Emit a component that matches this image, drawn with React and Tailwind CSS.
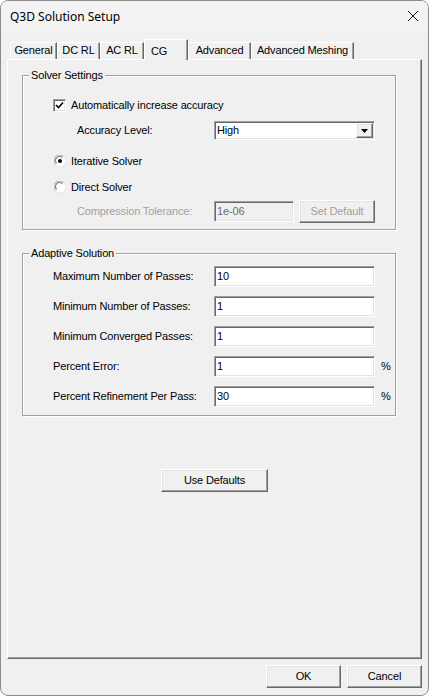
import React from "react";

const sunken =
  "border border-t-[#a0a0a0] border-l-[#a0a0a0] border-b-white border-r-white shadow-[inset_1px_1px_0_#696969,inset_-1px_-1px_0_#e3e3e3]";
const raised =
  "border border-t-white border-l-white border-b-[#696969] border-r-[#696969] shadow-[inset_-1px_-1px_0_#a0a0a0,inset_1px_1px_0_#e3e3e3]";
const etched =
  "border border-[#a0a0a0] shadow-[1px_1px_0_#fff,inset_1px_1px_0_#fff]";

const tabs = [
  { label: "General", w: "w-[47px]" },
  { label: "DC RL", w: "w-[43px]" },
  { label: "AC RL", w: "w-[44px]" },
  { label: "CG", w: "w-[44px]", active: true },
  { label: "Advanced", w: "w-[63px]" },
  { label: "Advanced Meshing", w: "w-[103px]" },
];

const passes = [
  { label: "Maximum Number of Passes:", value: "10" },
  { label: "Minimum Number of Passes:", value: "1" },
  { label: "Minimum Converged Passes:", value: "1" },
  { label: "Percent Error:", value: "1", unit: "%" },
  { label: "Percent Refinement Per Pass:", value: "30", unit: "%" },
];

const GroupBox = ({ title, className, children }) => (
  <div className={`relative ml-[14px] w-[374px] ${etched} ${className}`}>
    <span className="absolute -top-[7px] left-[6px] px-[2px] bg-[#f0f0f0] leading-[13px]">
      {title}
    </span>
    {children}
  </div>
);

const Radio = ({ checked }) => (
  <svg width="12" height="12" viewBox="0 0 12 12">
    <circle cx="6" cy="6" r="5.5" fill="#fff" />
    <path d="M1.5 9.5A5 5 0 0 1 9.5 1.5" stroke="#a0a0a0" fill="none" />
    <path d="M2.6 8.4A3.6 3.6 0 0 1 8.4 2.6" stroke="#5a5a5a" fill="none" />
    <path d="M10.5 2.5A5 5 0 0 1 2.5 10.5" stroke="#e3e3e3" fill="none" />
    {checked && <circle cx="6" cy="6" r="2" fill="#000" />}
  </svg>
);

const Button = ({ children, className, disabled }) => (
  <div
    className={`flex items-center justify-center h-[23px] bg-[#f0f0f0] ${raised} ${
      disabled ? "text-[#a0a0a0]" : "text-black"
    } ${className}`}
  >
    {children}
  </div>
);

export default function App() {
  return (
    <div
      className="w-[429px] h-[696px] bg-white text-[11px] tracking-[-0.15px] text-black"
      style={{ fontFamily: '"Liberation Sans", Arial, sans-serif' }}
    >
      <div className="w-full h-full rounded-[8px] border border-[#8c8c8c] bg-[#f0f0f0] flex flex-col overflow-hidden">
        {/* title bar */}
        <div className="h-[31px] bg-[#f3f3f3] flex items-center justify-between pl-[9px] pr-[9px]">
          <span
            className="text-[12px] tracking-normal"
            style={{ fontFamily: '"Noto Sans", "Open Sans", sans-serif' }}
          >
            Q3D Solution Setup
          </span>
          <svg width="12" height="12" viewBox="0 0 12 12" className="mt-[-1px]">
            <path d="M1 1L11 11M11 1L1 11" stroke="#1a1a1a" strokeWidth="1" />
          </svg>
        </div>

        <div className="pl-[6px] pr-[6px] pt-[7px]">
          {/* tab strip */}
          <div className="flex items-end h-[20px] ml-[3px]">
            {tabs.map((t) =>
              t.active ? (
                <div
                  key={t.label}
                  className={`${t.w} relative z-10 h-[21px] -mb-[1px] bg-[#f0f0f0] border-t border-l border-t-white border-l-white border-r border-r-[#696969] shadow-[inset_-1px_0_0_#a0a0a0] flex justify-start pt-[3px] pl-[6px]`}
                >
                  {t.label}
                </div>
              ) : (
                <div
                  key={t.label}
                  className={`${t.w} h-[17px] border-t border-l border-t-white border-l-white border-r border-r-[#696969] shadow-[inset_-1px_0_0_#a0a0a0] flex items-center justify-center pb-[1px]`}
                >
                  {t.label}
                </div>
              )
            )}
          </div>

          {/* tab page */}
          <div className="h-[600px] border border-t-white border-l-white border-b-[#696969] border-r-[#696969] shadow-[inset_-1px_-1px_0_#a0a0a0] flex flex-col">
            <GroupBox title="Solver Settings" className="mt-[15px] h-[155px]">
              <div className="flex items-center h-[20px] mt-[19px] pl-[30px] gap-[5px]">
                <div className={`w-[13px] h-[13px] bg-white ${sunken} flex items-center justify-center`}>
                  <svg width="9" height="9" viewBox="0 0 9 9">
                    <path d="M1 4L3.5 6.5L8 1.5" stroke="#000" strokeWidth="1.6" fill="none" />
                  </svg>
                </div>
                <span>Automatically increase accuracy</span>
              </div>
              <div className="flex items-center h-[19px] mt-[6px] pl-[54px]">
                <span className="w-[137px]">Accuracy Level:</span>
                <div className={`w-[161px] h-[19px] bg-white ${sunken} flex items-center justify-between pl-[2px] pr-[1px]`}>
                  <span>High</span>
                  <div className={`w-[17px] h-[15px] bg-[#f0f0f0] ${raised} flex items-center justify-center`}>
                    <svg width="7" height="4" viewBox="0 0 7 4">
                      <path d="M0 0H7L3.5 4Z" fill="#000" />
                    </svg>
                  </div>
                </div>
              </div>
              <div className="flex items-center h-[20px] mt-[11px] pl-[31px] gap-[5px]">
                <Radio checked />
                <span>Iterative Solver</span>
              </div>
              <div className="flex items-center h-[20px] mt-[6px] pl-[31px] gap-[5px]">
                <Radio />
                <span>Direct Solver</span>
              </div>
              <div className="flex items-center h-[21px] mt-[4px] pl-[54px]">
                <span className="w-[137px] text-[#a0a0a0]">Compression Tolerance:</span>
                <div className={`w-[80px] h-[21px] bg-[#f0f0f0] ${sunken} flex items-center pl-[2px] text-[#6d6d6d]`}>
                  1e-06
                </div>
                <Button disabled className="w-[76px] ml-[5px]">
                  Set Default
                </Button>
              </div>
            </GroupBox>

            <GroupBox title="Adaptive Solution" className="mt-[23px] h-[163px] pt-[12px] flex flex-col gap-[9px]">
              {passes.map((p) => (
                <div key={p.label} className="flex items-center h-[21px] pl-[30px]">
                  <span className="w-[161px]">{p.label}</span>
                  <div className={`w-[161px] h-[21px] bg-white ${sunken} flex items-center pl-[2px]`}>
                    {p.value}
                  </div>
                  {p.unit && <span className="ml-[6px]">{p.unit}</span>}
                </div>
              ))}
            </GroupBox>

            <Button className="w-[107px] mt-[53px] mx-auto">Use Defaults</Button>
          </div>

          {/* dialog buttons */}
          <div className="flex justify-end gap-[6px] mt-[6px]">
            <Button className="w-[75px]">OK</Button>
            <Button className="w-[75px]">Cancel</Button>
          </div>
        </div>
      </div>
    </div>
  );
}
